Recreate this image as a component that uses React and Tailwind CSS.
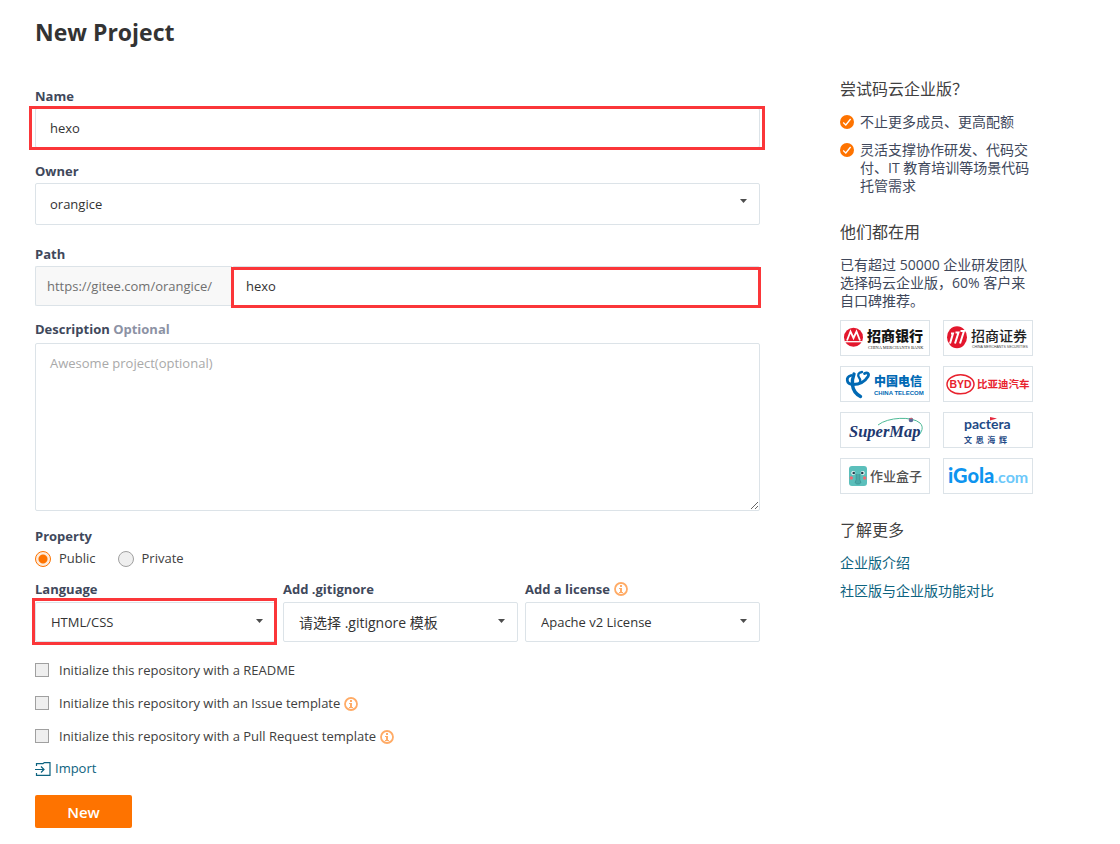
import React from "react";

function InfoIcon() {
  return (
    <svg className="size-[14px] shrink-0" viewBox="0 0 14 14" aria-hidden="true">
      <circle cx="7" cy="7" r="6" fill="none" stroke="#ffab66" strokeWidth="1.8" />
      <rect x="6" y="3" width="2" height="2" fill="#ffab66" />
      <path d="M5 6h3v4h1v1H5v-1h1V7H5z" fill="#ffab66" />
    </svg>
  );
}

function ImportIcon() {
  return (
    <svg className="h-[14px] w-4 shrink-0" viewBox="0 0 16 14" fill="none" stroke="#0d6380" strokeWidth="1.2" aria-hidden="true">
      <path d="M1.500 4V1.600h6.500l1.400-1H15v12.800H1.500v-2.400" />
      <path d="M0 7.500h9M6 4.500l3 3-3 3" />
    </svg>
  );
}

function CheckBadge() {
  return (
    <svg className="mt-[2px] size-[14px] shrink-0" viewBox="0 0 14 14" aria-hidden="true">
      <circle cx="7" cy="7" r="7" fill="#fe7300" />
      <path d="M3.2 7.600l2.600 2.400 4.800-6" fill="none" stroke="#fff" strokeWidth="1.3" />
    </svg>
  );
}

function Marker({ className }) {
  return <span aria-hidden="true" className={"pointer-events-none absolute border-[3px] border-[#fb3639] " + className} />;
}

const label = "block text-[13px] leading-5 font-bold text-[#40485b]";
const box = "w-full rounded-[2px] border border-[#dce3e8] bg-white text-[#333] outline-none";

function Select({ id, options, className, caret = "top-[17px]" }) {
  return (
    <div className="relative">
      <select id={id} className={box + " block appearance-none pt-[2px] pr-8 " + className}>
        {options.map((o) => (
          <option key={o}>{o}</option>
        ))}
      </select>
      <svg className={"pointer-events-none absolute right-[13px] h-1 w-[7px] " + caret} viewBox="0 0 7 4" aria-hidden="true">
        <path d="M0 0h7L3.5 4z" fill="#4d4d4d" />
      </svg>
    </div>
  );
}

function CheckRow({ id, text, info }) {
  return (
    <div className="flex h-[33px] items-center">
      <input
        id={id}
        type="checkbox"
        className="size-[14px] shrink-0 appearance-none border border-[#a0a0a0] bg-[#efefef] checked:bg-[#fe7300]"
      />
      <label htmlFor={id} className="flex items-center gap-1 pt-[2px] pl-[10px] text-[13px] text-[#404040]">
        {text}
        {info && <InfoIcon />}
      </label>
    </div>
  );
}

function Radio({ id, text, defaultChecked }) {
  return (
    <div className="flex items-center">
      <input
        id={id}
        type="radio"
        name="property"
        defaultChecked={defaultChecked}
        className="size-4 appearance-none rounded-full border border-[#a0a0a0] bg-[#efefef] checked:border-[#fe7300] checked:bg-[radial-gradient(circle,#fe7300_4px,#fdebdc_5px)]"
      />
      <label htmlFor={id} className="pl-2 text-[13px] text-[#404040]">
        {text}
      </label>
    </div>
  );
}

const cjk = "font-['Noto_Sans_CJK_SC',sans-serif]";

function LogoCard({ name, children }) {
  return (
    <svg className="h-9 w-[90px] border border-[#dce3e8]" viewBox="1 1 88 34" role="img" aria-label={name}>
      {children}
    </svg>
  );
}

function Logos() {
  return (
    <div className="mt-[10px] grid grid-cols-[90px_90px] gap-x-[13px] gap-y-[10px]">
      <LogoCard name="招商银行">
        <circle cx="13.5" cy="17.3" r="9.5" fill="#e3172d" />
        <path d="M7 20.500L10.500 11.500 13.500 18l3-6.500L20 20.500" fill="none" stroke="#fff" strokeWidth="1.800" />
        <path d="M5 21.700h17" stroke="#fff" strokeWidth="1.300" />
        <text x="27" y="21" fontSize="14" fontWeight="900" fill="#151515" className={cjk}>招商银行</text>
        <text x="28" y="29" fontSize="4.400" fill="#222" className="font-['Liberation_Serif',serif]">CHINA MERCHANTS BANK</text>
      </LogoCard>
      <LogoCard name="招商证券">
        <ellipse cx="14" cy="17.3" rx="10" ry="11" fill="#e3172d" />
        <path d="M7 23.500L10 13.500H8M12 23.500l3.500-11h-3M17 23.500l4-12.500h-3.500" fill="none" stroke="#fff" strokeWidth="2" />
        <text x="28" y="21" fontSize="14" fontWeight="500" fill="#222" className={cjk}>招商证券</text>
        <text x="29" y="28" fontSize="3.500" fill="#444" className="font-['Liberation_Sans',sans-serif]">CHINA MERCHANTS SECURITIES</text>
      </LogoCard>
      <LogoCard name="中国电信 China Telecom">
        <path d="M11 9.500C5.500 11 6 18.500 13 18.500c6 0 12-3 15-8 1.500-3-.5-4.500-3.500-3" fill="none" stroke="#0069b4" strokeWidth="2.800" strokeLinecap="round" />
        <path d="M22 6c-4 .5-4.500 3-3 5.500 1.200 2 2 2.500 1 4" fill="none" stroke="#0069b4" strokeWidth="2.300" strokeLinecap="round" />
        <path d="M14 8c-1.500 4-2 7-1.500 11 .5 5 2.500 8.500 8 11.500" fill="none" stroke="#0069b4" strokeWidth="3.400" strokeLinecap="round" />
        <text x="34" y="20" fontSize="12" fontWeight="900" fill="#0069b4" className={cjk}>中国电信</text>
        <text x="34" y="29" fontSize="6" fontWeight="700" fill="#0069b4" className="font-['Liberation_Sans',sans-serif]">CHINA TELECOM</text>
      </LogoCard>
      <LogoCard name="比亚迪汽车 BYD">
        <ellipse cx="17.500" cy="18.300" rx="13.500" ry="9.500" fill="none" stroke="#e8222e" strokeWidth="1.500" />
        <text x="6.500" y="22" fontSize="10.500" fontWeight="700" fill="#e8222e" className="font-['Liberation_Sans',sans-serif]">BYD</text>
        <text x="34" y="22" fontSize="10.500" fontWeight="700" fill="#e8222e" className={cjk}>比亚迪汽车</text>
      </LogoCard>
      <LogoCard name="SuperMap">
        <path d="M38 13C48 5 72 4 80 11c4 4 2 9-2 13" fill="none" stroke="#4dba96" strokeWidth="1" />
        <circle cx="71" cy="8" r="2.300" fill="#5a6a9a" />
        <path d="M69.500 7.500l1.500-1.500 1.500 1" stroke="#d4636a" fill="none" />
        <text x="9" y="25" fontSize="16.500" fontWeight="700" fontStyle="italic" fill="#20386f" className="font-['Liberation_Serif',serif]">SuperMap</text>
      </LogoCard>
      <LogoCard name="pactera 文思海辉">
        <text x="21" y="17" fontSize="14" fontWeight="700" fill="#1f4a86" className="font-['Lato',sans-serif]">pactera</text>
        <path d="M47 5l7 1.500-7 2z" fill="#e5293e" />
        <text x="21" y="31" fontSize="8" fontWeight="700" fill="#1f4a86" className={cjk}>文&nbsp; 思&nbsp; 海&nbsp; 辉</text>
      </LogoCard>
      <LogoCard name="作业盒子">
        <rect x="9" y="8" width="18" height="20" rx="3" fill="#5bbfbb" />
        <circle cx="13.300" cy="15" r="2" fill="#fff" />
        <circle cx="22.700" cy="15" r="2" fill="#fff" />
        <circle cx="13.700" cy="15" r="1.300" fill="#223c4c" />
        <circle cx="22.300" cy="15" r="1.300" fill="#223c4c" />
        <circle cx="11.300" cy="20" r="1.700" fill="#ee6a72" />
        <circle cx="24.700" cy="20" r="1.700" fill="#ee6a72" />
        <path d="M16.200 16v5.500c0 1-1 1.500-1 2.800 0 2.400 5.600 2.400 5.600 0 0-1.300-1-1.800-1-2.800V16" fill="#4aa9a8" stroke="#37898c" strokeWidth=".6" />
        <text x="30" y="23" fontSize="13" fontWeight="500" fill="#505050" className={cjk}>作业盒子</text>
      </LogoCard>
      <LogoCard name="iGola.com">
        <text x="5" y="25" fontSize="20" fill="#0e94ef" className="font-['Lato',sans-serif]">
          <tspan fontWeight="900">iGola</tspan>
          <tspan fontSize="16" fontWeight="700" fill="#6cc8fa">.com</tspan>
        </text>
      </LogoCard>
    </div>
  );
}

function Sidebar() {
  const heading = "text-base leading-6 text-[#404040]";
  return (
    <aside className="w-[194px] shrink-0 pt-[61px] text-sm leading-[18px] text-[#40485b]">
      <h2 className={heading}>尝试码云企业版？</h2>
      <ul className="mt-3 flex flex-col gap-[10px]">
        <li className="flex gap-[6px]">
          <CheckBadge />
          不止更多成员、更高配额
        </li>
        <li className="flex gap-[6px]">
          <CheckBadge />
          <span>
            灵活支撑协作研发、代码交
            <br />
            付、IT 教育培训等场景代码
            <br />
            托管需求
          </span>
        </li>
      </ul>
      <h2 className={heading + " mt-[25px]"}>他们都在用</h2>
      <p className="mt-3">
        已有超过 50000 企业研发团队
        <br />
        选择码云企业版，60% 客户来
        <br />
        自口碑推荐。
      </p>
      <Logos />
      <h2 className={heading + " mt-6"}>了解更多</h2>
      <div className="mt-3 flex flex-col items-start gap-[10px] text-[#0d6380]">
        <a href="#enterprise">企业版介绍</a>
        <a href="#compare">社区版与企业版功能对比</a>
      </div>
    </aside>
  );
}

export default function App() {
  return (
    <div className="flex items-start gap-20 bg-white pt-4 pr-[86px] pb-4 pl-[35px] font-['Open_Sans','Noto_Sans_CJK_SC',sans-serif]">
      <main className="min-w-0 flex-1">
        <h1 className="text-[23px] leading-8 font-bold text-[#333]">New Project</h1>
        <form onSubmit={(e) => e.preventDefault()}>
          <label htmlFor="name" className={label + " mt-[38px]"}>Name</label>
          <div className="relative mt-[2px]">
            <input id="name" defaultValue="hexo" className={box + " block h-10 px-[14px] text-[13px]"} />
            <Marker className="-top-[2px] -right-[5px] -bottom-[2px] -left-[6px]" />
          </div>

          <label htmlFor="owner" className={label + " mt-[13px]"}>Owner</label>
          <div className="mt-[2px]">
            <Select id="owner" options={["orangice"]} className="h-[42px] pl-[14px] text-[13px]" caret="top-4" />
          </div>

          <label htmlFor="path" className={label + " mt-[19px]"}>Path</label>
          <div className="mt-[2px] flex h-10">
            <span className="flex w-[197px] items-center rounded-l-[2px] border border-r-0 border-[#dce3e8] bg-[#f8f8f8] pt-[2px] pl-[11px] text-[13px] text-[#707070]">
              https://gitee.com/orangice/
            </span>
            <div className="relative flex-1">
              <input id="path" defaultValue="hexo" className={box + " block h-10 px-[13px] text-[13px]"} />
              <Marker className="top-[1px] -right-[1px] -bottom-[2px] -left-[1px]" />
            </div>
          </div>

          <label htmlFor="description" className={label + " mt-[13px]"}>
            Description <span className="text-[#8c92a4]">Optional</span>
          </label>
          <textarea
            id="description"
            placeholder="Awesome project(optional)"
            className={box + " mt-1 block h-[168px] resize px-[14px] py-[9px] text-[13px] leading-5 placeholder:text-[#a9a9a9]"}
          />

          <fieldset className="mt-[15px]">
            <legend className={label}>Property</legend>
            <div className="mt-[3px] flex h-5 items-center gap-[22px]">
              <Radio id="public" text="Public" defaultChecked />
              <Radio id="private" text="Private" />
            </div>
          </fieldset>

          <div className="mt-[10px] grid grid-cols-[241fr_235fr_235fr] gap-[7px]">
            <div>
              <label htmlFor="language" className={label}>Language</label>
              <div className="relative mt-[3px]">
                <Select id="language" options={["HTML/CSS"]} className="h-10 pl-[15px] text-[13px]" />
                <Marker className="-top-1 -right-[1px] -bottom-[3px] -left-[3px]" />
              </div>
            </div>
            <div>
              <label htmlFor="gitignore" className={label}>Add .gitignore</label>
              <div className="mt-[3px]">
                <Select id="gitignore" options={["请选择 .gitignore 模板"]} className="h-10 pl-[15px] text-sm" />
              </div>
            </div>
            <div>
              <div className="flex items-center gap-1">
                <label htmlFor="license" className={label}>Add a license</label>
                <InfoIcon />
              </div>
              <div className="mt-[3px]">
                <Select id="license" options={["Apache v2 License"]} className="h-10 pl-[15px] text-[13px]" />
              </div>
            </div>
          </div>

          <div className="mt-[11px]">
            <CheckRow id="readme" text="Initialize this repository with a README" />
            <CheckRow id="issue" text="Initialize this repository with an Issue template" info />
            <CheckRow id="pull" text="Initialize this repository with a Pull Request template" info />
          </div>
          <a href="#import" className="inline-flex h-[33px] items-center gap-1 text-[13px] text-[#0d6380]">
            <ImportIcon />
            Import
          </a>
          <button type="submit" className="mt-[10px] block h-[33px] w-[97px] rounded-[2px] bg-[#fe7300] pt-[2px] text-[15px] font-semibold text-white">
            New
          </button>
        </form>
      </main>
      <Sidebar />
    </div>
  );
}
